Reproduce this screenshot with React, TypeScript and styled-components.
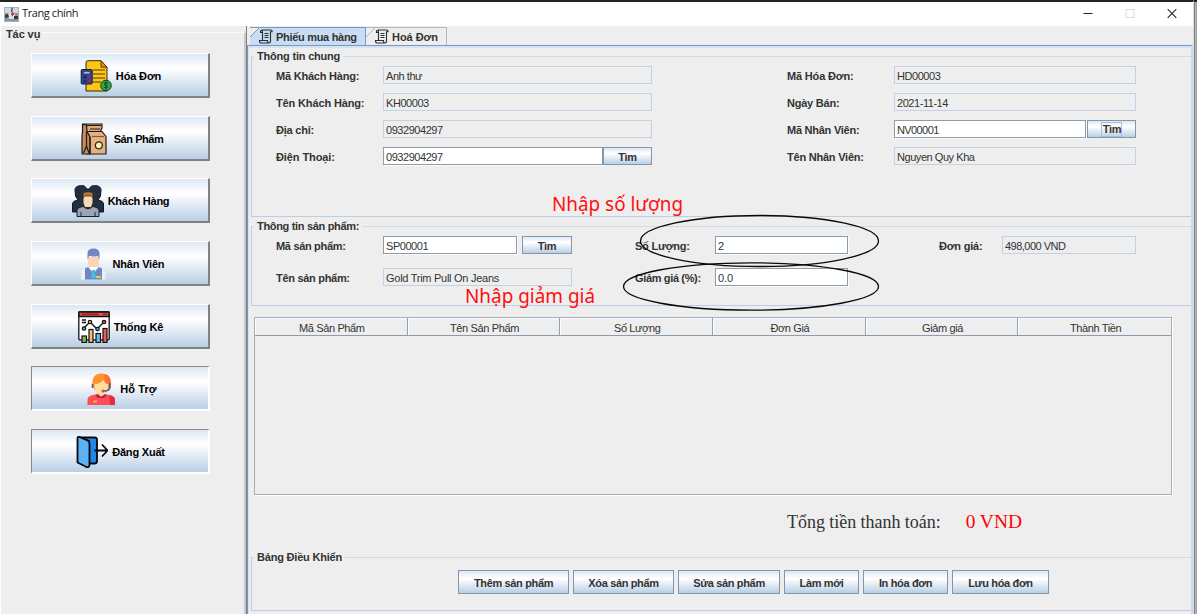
import React from "react";
import styled, { createGlobalStyle, css } from "styled-components";

const GlobalStyle = createGlobalStyle`
  * { box-sizing: border-box; }
  body { margin: 0; background: #eeeeee; }
`;

const Window = styled.div`
  position: relative;
  width: 1197px;
  height: 614px;
  overflow: hidden;
  display: flex;
  background: #eeeeee;
  color: #333333;
  font: 11px/14px "Liberation Sans", Arial, sans-serif;
`;

const Frame = styled.div`
  flex: 1;
  min-width: 0;
  display: flex;
  flex-direction: column;
  border-top: 2px solid #232323;
`;

const Edge = styled.div`
  width: 4px;
  border-top: 2px solid #232323;
  border-left: 1px solid #dcdcdc;
  background: linear-gradient(90deg, #808080 0 1px, #b4b4b4 1px 2px, #a2a2a2 2px);
`;

const TitleBar = styled.header`
  height: 24px;
  flex: none;
  display: flex;
  align-items: center;
  gap: 3px;
  padding: 0 16px 0 4px;
  background: #ffffff;
  color: #1a1a1a;
`;

const WindowTitle = styled.span`
  flex: 1;
  padding-bottom: 2px;
  font: 11px/14px "Open Sans", sans-serif;
  letter-spacing: -0.4px;
`;

const WindowControls = styled.div`
  display: flex;
  align-items: center;
  gap: 32px;
`;

const Body = styled.div`
  flex: 1;
  display: flex;
  min-height: 0;
`;

const Sidebar = styled.aside`
  width: 247px;
  flex: none;
  display: flex;
  border-left: 1px solid #ffffff;
  border-right: 1px solid #808080;
  padding-top: 6px;
`;

const TaskPanel = styled.section`
  flex: 1;
  border-top: 1px solid #fafafa;
  border-right: 2px solid #c9c9c9;
`;

const TaskLegend = styled.h2`
  margin: -6px 0 0 3px;
  width: fit-content;
  padding: 0 2px;
  background: #eeeeee;
  font-size: 11px;
  line-height: 14px;
  letter-spacing: -0.1px;
`;

const TaskList = styled.nav`
  display: flex;
  flex-direction: column;
  gap: 17.7px;
  padding: 12px 0 0 30px;
`;

const metal = css`
  background: linear-gradient(180deg, #dde8f3 0%, #ffffff 34%, #f8fafd 42%, #b8cfe5 100%);
`;

const TaskButton = styled.button<{ $sunken?: boolean; $spacing: number }>`
  width: 179px;
  height: 45px;
  padding: 2px 0 0 1px;
  display: flex;
  align-items: center;
  justify-content: center;
  gap: 4px;
  ${metal}
  border-style: solid;
  border-color: ${(p) => (p.$sunken ? "#8a8a8a #ffffff #ffffff #8a8a8a" : "#ffffff #828282 #828282 #ffffff")};
  border-width: 1px 2px 2px 1px;
  color: #000000;
  font: bold 11px/14px "Liberation Sans", Arial, sans-serif;
  letter-spacing: ${(p) => p.$spacing}px;
`;

const Main = styled.main`
  flex: 1;
  min-width: 0;
  display: flex;
  flex-direction: column;
`;

const TabStrip = styled.div`
  display: flex;
  height: 19px;
  padding: 1px 0 0 3px;
  flex: none;
`;

const Tab = styled.button<{ $active?: boolean; $width: number; $spacing: number }>`
  width: ${(p) => p.$width}px;
  height: 18px;
  display: flex;
  align-items: center;
  gap: 3px;
  padding: 0 0 0 9px;
  border: 1px solid ${(p) => (p.$active ? "#7a96c8" : "#b0b8c4")};
  border-bottom: 0;
  border-left-width: 0;
  background: ${(p) =>
    p.$active
      ? "linear-gradient(135deg, #eeeeee 6px, #7a96c8 6px 7px, #c8ddf2 7px)"
      : "linear-gradient(135deg, #eeeeee 6px, #a0b4d4 6px 7px, #eeeeee 7px)"};
  color: #333333;
  font: bold 11px/14px "Liberation Sans", Arial, sans-serif;
  letter-spacing: ${(p) => p.$spacing}px;
  white-space: nowrap;
`;

const TabPage = styled.div`
  flex: 1;
  display: flex;
  flex-direction: column;
  border: 1px solid #7a96c8;
  border-right: 2px solid #c8ddf2;
  border-bottom: 0;
  box-shadow: inset 1px 2px 0 #d6e4f2;
  padding: 10px 0 0 3px;
`;

const Group = styled.section<{ $height: number; $gap: number }>`
  flex: none;
  height: ${(p) => p.$height}px;
  margin-bottom: ${(p) => p.$gap}px;
  border: 1px solid #b8cfe5;
  border-top-color: #cddceb;
  border-right-width: 0;
`;

const Legend = styled.h3<{ $spacing?: number }>`
  width: fit-content;
  margin: -8px 0 1px 2px;
  padding: 0 3px;
  background: #eeeeee;
  font-size: 11px;
  line-height: 14px;
  letter-spacing: ${(p) => p.$spacing ?? -0.2}px;
`;

const InfoGrid = styled.div`
  display: grid;
  grid-template-columns: 107px 404px 107px 242px;
  grid-auto-rows: 18px;
  row-gap: 9px;
  padding: 2px 0 0 24px;
`;

const ProductGrid = styled.div`
  display: grid;
  grid-template-columns: 107px 252px 80px 224px 63px 134px;
  grid-auto-rows: 18px;
  row-gap: 14px;
  padding: 2px 0 0 24px;
`;

const Label = styled.label<{ $spacing?: number }>`
  font-weight: bold;
  line-height: 20px;
  white-space: nowrap;
  letter-spacing: ${(p) => p.$spacing ?? -0.22}px;
`;

const FieldRow = styled.div<{ $gap?: number }>`
  display: flex;
  gap: ${(p) => p.$gap ?? 0}px;
`;

const Field = styled.div<{ $width: number; $editable?: boolean; $spacing?: number }>`
  width: ${(p) => p.$width}px;
  height: 18px;
  padding-left: 2px;
  border: 1px solid ${(p) => (p.$editable ? "#8b9cae" : "#bfd2e6")};
  background: ${(p) => (p.$editable ? "#ffffff" : "#eeeeee")};
  box-shadow: ${(p) => (p.$editable ? "1px 1px 0 #fbfbfb" : "none")};
  line-height: 18px;
  letter-spacing: ${(p) => p.$spacing ?? -0.45}px;
  white-space: nowrap;
`;

const Button = styled.button<{ $width: number; $height?: number; $spacing?: number }>`
  width: ${(p) => p.$width}px;
  height: ${(p) => p.$height ?? 18}px;
  padding: 1px 0 0;
  border: 1px solid #8496aa;
  ${metal}
  color: #333333;
  font: bold 11px/14px "Liberation Sans", Arial, sans-serif;
  letter-spacing: ${(p) => p.$spacing ?? -0.35}px;
`;

const FocusText = styled.span`
  display: inline-block;
  padding: 0 0 0 1px;
  border: 1px solid #a8bfd9;
  line-height: 13px;
`;

const Table = styled.div`
  width: 918px;
  height: 178px;
  margin-left: 3px;
  flex: none;
  border: 1px solid #a4afba;
  box-shadow: 1px 1px 0 #ffffff;
`;

const TableHead = styled.div`
  display: grid;
  grid-template-columns: repeat(6, 1fr);
`;

const HeadCell = styled.div`
  height: 18px;
  padding-left: 2px;
  border-right: 1px solid #93a2b1;
  border-bottom: 1px solid #8b9cae;
  box-shadow: inset 1px 1px 0 #ffffff;
  text-align: center;
  line-height: 20px;
  letter-spacing: -0.37px;
  &:last-child { border-right: 0; }
`;

const TotalRow = styled.div`
  display: flex;
  align-items: baseline;
  gap: 25px;
  height: 62px;
  padding: 16px 0 0 536px;
  font: 18px/22px "Liberation Serif", "Times New Roman", serif;
  letter-spacing: -0.04px;
  white-space: nowrap;
`;

const TotalValue = styled.span`
  color: #ff0000;
  font-size: 19.5px;
`;

const Actions = styled.div`
  display: flex;
  gap: 4px;
  padding: 5px 0 0 206px;
`;

const Annotations = styled.svg`
  position: absolute;
  left: 440px;
  top: 185px;
  pointer-events: none;
`;

const JavaIcon = () => (
  <svg width="15" height="15" viewBox="0 0 15 15">
    <rect x=".5" y=".5" width="14" height="14" fill="#cfd8e0" stroke="#a7b4c0" />
    <path d="M1 6h13v8H1z" fill="#8496a8" />
    <path d="M7.500 1c2 1-1 2 .5 4" fill="none" stroke="#555" strokeWidth="1.500" />
    <path d="M4 7c2-2 5-2 7 0l-1 5H5z" fill="#dfe3e7" />
    <path d="M8 4.500l2.500 2-2 3-1.500-2z" fill="#c8372f" />
    <path d="M1 8l3-1 1 3-4 1zM10 9h4v3h-4z" fill="#30363e" />
  </svg>
);

const SheetIcon = () => (
  <svg width="14" height="15" viewBox="0 0 14 15" fill="none" stroke="#2c2c2c" strokeWidth="1.1">
    <path d="M3.500 11V3C3.500 1.500 2 1.200 1.500 2v1.500h2M2.500 1H11.500c1.500 0 1.800.700 1.500 1.800H11.500V12c0 1.300-.700 2-1.700 2H2C.900 14 .500 12.800.500 11.500H8.500c0 1.500.500 2.500 1.300 2.500" />
    <path d="M5.500 4.500h4M5.500 6.500h4M5.500 8.500h4" />
  </svg>
);

const InvoiceIcon = () => (
  <svg width="32" height="32" viewBox="0 0 32 32">
    <path d="M8 .700h13l6 6.500V31H6V3q0-2.300 2-2.300z" fill="#ffc414" stroke="#33280c" />
    <path d="M21 .700V7.200h6z" fill="#f28a1c" stroke="#33280c" strokeWidth=".8" />
    <path d="M13 10h12M13 14h12M13 18h12M13 22h8" stroke="#4c3a0a" />
    <rect x="1.200" y="9.500" width="11" height="14.500" rx="1" fill="#32458f" stroke="#141c46" />
    <path d="M3.500 11.500h6.500v2.500H3.500z" fill="#a9b4da" stroke="#141c46" strokeWidth=".5" />
    <path d="M3.500 17h3M5 15.500v3M3.500 21h3" stroke="#10173d" />
    <path d="M8 17h2.500M8 21h2.500" stroke="#b82133" strokeWidth="1.800" />
    <circle cx="26" cy="25.500" r="5.300" fill="#35a650" stroke="#143d20" />
    <path d="M28 23.200c-2-1.300-4-.500-3.700.900.400 1.500 3.500.900 3.500 2.500 0 1.300-2.300 1.700-4 .400M26 21.500v8" fill="none" stroke="#123f1d" strokeWidth=".9" />
  </svg>
);

const BagIcon = () => (
  <svg width="32" height="32" viewBox="0 0 32 32" stroke="#1f1a16" strokeWidth="1.200">
    <path d="M5 1h19v4l-2 4H9z" fill="#dfaa7c" />
    <path d="M5 2.500h18M12 6h10" fill="none" />
    <path d="M9 8.500h15l4 5V31H9z" fill="#e5b17e" />
    <path d="M4.500 1.500v7L4 13v18h8V14L9 8.500 8.500 2z" fill="#c58d62" />
    <path d="M8.500 9v14M8.500 23L5.500 30M8.500 23l2.500 7M12 14v17" fill="none" />
    <path d="M14 13.500h12" stroke="#8a5836" fill="none" />
    <path d="M20 19c3-.500 4.500 1 4.300 3.500-.300 3-2.700 4-5 3-2.500-.900-3-5.500.700-6.500z" fill="#fff0b8" />
  </svg>
);

const PeopleIcon = () => (
  <svg width="32" height="32" viewBox="0 0 32 32">
    <path d="M3 5C3 2 6 .500 9 .800c3-.800 5 1 5.500 3.200h3C18 1.500 20 .300 23 .800c3-.500 6 1.200 6 4.200l-.500 6-2.500 4c3 .800 5.500 1.500 5.500 4v8H.500v-8c0-2.500 2.500-3.200 5.500-4l-2.500-4z" fill="#222f40" stroke="#101820" />
    <path d="M11.500 11h9v7l-1.500 4h-6l-1.500-4z" fill="#fbd9b0" />
    <path d="M11 13V9c0-3 10-3 10 0v4l-2-2h-6z" fill="#b0713f" stroke="#412816" strokeWidth=".7" />
    <path d="M5 31.500V26c0-3 3-4 7-4.500 1 3 7 3 8 0 4 .500 7 1.500 7 4.500v5.500z" fill="#9aa6b5" stroke="#1b222b" />
    <path d="M9 27v4M23 27v4" stroke="#1b222b" />
  </svg>
);

const StaffIcon = () => (
  <svg width="32" height="32" viewBox="0 0 32 32">
    <path d="M11 9h11v6c0 5-3 7-5.500 7S11 20 11 15z" fill="#ffd3b5" />
    <path d="M10.500 12V5c0-3 2-4.500 6-4.500 5 0 6.500 3 6 7V12L21 8c-3 .800-7 .500-9 0z" fill="#6f88c0" />
    <path d="M4 31.500v-6c0-4 3-5.500 7.500-6.500L16.500 24l5-5C26 20 28.500 21.500 28.500 25.500v6z" fill="#edf0f5" />
    <path d="M8 20.500l3-1.500 5.500 5.500L22 19l3 1.500V31.500H8z" fill="#6f88c0" />
    <path d="M12 19h9l-4.500 7z" fill="#ffffff" />
    <path d="M15 22h3v3l1 4-2.500 2L14 29l1-4z" fill="#45bfe8" />
    <path d="M19 28h5v2h-5z" fill="#e2c65c" />
  </svg>
);

const ChartIcon = () => (
  <svg width="32" height="32" viewBox="0 0 32 32" stroke="#111111" strokeWidth="1.300">
    <rect x=".800" y=".800" width="30.400" height="28" rx="1.200" fill="#ffffff" />
    <path d="M1 1h30v4.500H1z" fill="#e8524c" />
    <path d="M3.500 3.200h17M25 3.200h4" stroke="#8f2723" strokeWidth="1.500" />
    <path d="M4 9h4M4 11.500h4" fill="none" />
    <path d="M6 17l6-6 7 7 7-7" fill="none" />
    <g strokeWidth="1.200">
      <rect x="4" y="25" width="4.500" height="6.500" fill="#7fb65b" />
      <rect x="11" y="18.500" width="4" height="13" fill="#f0c166" />
      <rect x="18" y="22.500" width="4.500" height="9" fill="#62bdea" />
      <rect x="25" y="17.500" width="4" height="14" fill="#ef5951" />
      <circle cx="6" cy="17.500" r="1.700" fill="#7fb65b" />
      <circle cx="12" cy="11" r="1.700" fill="#f0c166" />
      <circle cx="19.500" cy="18" r="1.700" fill="#62bdea" />
      <circle cx="26" cy="11" r="1.700" fill="#ef5951" />
    </g>
  </svg>
);

const SupportIcon = () => (
  <svg width="32" height="32" viewBox="0 0 32 32">
    <path d="M9 14C7 6 10 .500 17 .500S27.500 6 26 14l-3 4H11z" fill="#ff9233" />
    <path d="M20 1c7 1 8 7 6 13l-3 3z" fill="#ff7034" />
    <path d="M10.500 11c5 0 7-2 9-4 1 3 3 4 4.500 4v4c0 4-3 6-4 6v3h-6v-3c-2-1-3.500-3-3.500-6z" fill="#ffdc9f" />
    <path d="M3.500 32v-5c0-4 4-5 9-5.500l4.500 2 5-2c5 .500 9 2 9 5.500v5z" fill="#ff4f55" />
    <path d="M25 22c4 1 6 2 6 5v5h-5z" fill="#e32c46" />
    <path d="M11 22l3-1 3 3 4-3 2 1-3 3h-6z" fill="#b72352" />
    <path d="M8.500 11v4M26 10v4c0 3-2 4-6 4" fill="none" stroke="#53616f" strokeWidth="1.600" />
    <circle cx="19" cy="18" r="1.500" fill="#d5485d" />
    <path d="M9 27.500h4v2H9z" fill="#ffae51" />
  </svg>
);

const ExitIcon = () => (
  <svg width="32" height="32" viewBox="0 0 32 32" stroke="#080808" strokeWidth="1.800" strokeLinejoin="round">
    <path d="M2.500 1.500h16c1.500 0 2.500.800 2.500 2V25c0 1.500-1 2.500-2.500 2.500H13V5z" fill="#2088e8" />
    <path d="M1.500 2v24.500l8.500 4.300c2 .800 3.500 0 3.500-2V8c0-2-.500-3-2-3.600L3.500 1C2.200.700 1.500 1 1.500 2z" fill="#5cb0f5" />
    <path d="M18.500 14.500h13M26 8.500l5.500 6-5.500 6" fill="none" />
  </svg>
);

const tasks = [
  { label: "Hóa Đơn", Icon: InvoiceIcon, spacing: -0.15 },
  { label: "Sản Phẩm", Icon: BagIcon, spacing: -0.45 },
  { label: "Khách Hàng", Icon: PeopleIcon, spacing: -0.25 },
  { label: "Nhân Viên", Icon: StaffIcon, spacing: -0.2 },
  { label: "Thống Kê", Icon: ChartIcon, spacing: -0.15 },
  { label: "Hỗ Trợ", Icon: SupportIcon, sunken: true, spacing: 0.1 },
  { label: "Đăng Xuất", Icon: ExitIcon, sunken: true, spacing: -0.2 },
];

const columns = ["Mã Sản Phẩm", "Tên Sản Phẩm", "Số Lượng", "Đơn Giá", "Giảm giá", "Thành Tiền"];

const actions = [
  { label: "Thêm sản phẩm", width: 111 },
  { label: "Xóa sản phẩm", width: 101 },
  { label: "Sửa sản phẩm", width: 102 },
  { label: "Làm mới", width: 75 },
  { label: "In hóa đơn", width: 85 },
  { label: "Lưu hóa đơn", width: 97 },
];

export default function App() {
  return (
    <>
      <GlobalStyle />
      <Window>
        <Frame>
          <TitleBar>
            <JavaIcon />
            <WindowTitle>Trang chính</WindowTitle>
            <WindowControls>
              <svg width="10" height="10" viewBox="0 0 10 10"><path d="M.5 4.500h9" stroke="#222" /></svg>
              <svg width="10" height="10" viewBox="0 0 10 10"><rect x="1" y=".5" width="8" height="8" fill="none" stroke="#dcdcdc" /></svg>
              <svg width="10" height="10" viewBox="0 0 10 10"><path d="M.7.2l8.600 8.600M9.300.2L.7 8.800" stroke="#222" strokeWidth="1.100" /></svg>
            </WindowControls>
          </TitleBar>
          <Body>
            <Sidebar>
              <TaskPanel>
                <TaskLegend>Tác vụ</TaskLegend>
                <TaskList>
                  {tasks.map(({ label, Icon, sunken, spacing }) => (
                    <TaskButton key={label} $sunken={sunken} $spacing={spacing}>
                      <Icon />
                      {label}
                    </TaskButton>
                  ))}
                </TaskList>
              </TaskPanel>
            </Sidebar>
            <Main>
              <TabStrip>
                <Tab $active $width={116} $spacing={-0.3}><SheetIcon />Phiếu mua hàng</Tab>
                <Tab $width={81} $spacing={-0.05}><SheetIcon />Hoá Đơn</Tab>
              </TabStrip>
              <TabPage>
                <Group $height={161} $gap={9}>
                  <Legend>Thông tin chung</Legend>
                  <InfoGrid>
                    <Label>Mã Khách Hàng:</Label>
                    <Field $width={269}>Anh thư</Field>
                    <Label $spacing={-0.17}>Mã Hóa Đơn:</Label>
                    <Field $width={242}>HD00003</Field>
                    <Label $spacing={-0.14}>Tên Khách Hàng:</Label>
                    <Field $width={269}>KH00003</Field>
                    <Label>Ngày Bán:</Label>
                    <Field $width={242}>2021-11-14</Field>
                    <Label>Địa chỉ:</Label>
                    <Field $width={269}>0932904297</Field>
                    <Label $spacing={-0.25}>Mã Nhân Viên:</Label>
                    <FieldRow $gap={1}>
                      <Field $width={192} $editable $spacing={-0.6}>NV00001</Field>
                      <Button $width={49}><FocusText>Tìm</FocusText></Button>
                    </FieldRow>
                    <Label $spacing={-0.1}>Điện Thoại:</Label>
                    <FieldRow>
                      <Field $width={220} $editable>0932904297</Field>
                      <Button $width={49}>Tìm</Button>
                    </FieldRow>
                    <Label>Tên Nhân Viên:</Label>
                    <Field $width={242}>Nguyen Quy Kha</Field>
                  </InfoGrid>
                </Group>
                <Group $height={80} $gap={11}>
                  <Legend $spacing={-0.32}>Thông tin sản phẩm:</Legend>
                  <ProductGrid>
                    <Label $spacing={-0.32}>Mã sản phẩm:</Label>
                    <FieldRow $gap={5}>
                      <Field $width={134} $editable>SP00001</Field>
                      <Button $width={50}>Tìm</Button>
                    </FieldRow>
                    <Label>Số Lượng:</Label>
                    <Field $width={133} $editable>2</Field>
                    <Label>Đơn giá:</Label>
                    <Field $width={134} $spacing={-0.52}>498,000 VND</Field>
                    <Label $spacing={-0.3}>Tên sản phẩm:</Label>
                    <Field $width={189} $spacing={-0.27}>Gold Trim Pull On Jeans</Field>
                    <Label $spacing={-0.35}>Giảm giá (%):</Label>
                    <Field $width={133} $editable $spacing={-0.1}>0.0</Field>
                  </ProductGrid>
                </Group>
                <Table>
                  <TableHead>
                    {columns.map((name) => <HeadCell key={name}>{name}</HeadCell>)}
                  </TableHead>
                </Table>
                <TotalRow>
                  <span>Tổng tiền thanh toán:</span>
                  <TotalValue>0 VND</TotalValue>
                </TotalRow>
                <Group $height={54} $gap={0}>
                  <Legend>Bảng Điều Khiển</Legend>
                  <Actions>
                    {actions.map(({ label, width }) => (
                      <Button key={label} $width={width} $height={24}>{label}</Button>
                    ))}
                  </Actions>
                </Group>
              </TabPage>
            </Main>
          </Body>
        </Frame>
        <Edge />
        <Annotations width="450" height="135" viewBox="440 185 450 135">
          <g fill="none" stroke="#0a0a0a" strokeWidth="1.300">
            <ellipse cx="759.500" cy="241" rx="119" ry="25.500" />
            <ellipse cx="751" cy="286.500" rx="127.500" ry="23.700" />
          </g>
          <g fill="#ff0f0f" fontFamily="'Noto Sans', sans-serif" fontSize="20">
            <text x="552" y="211" textLength="131" lengthAdjust="spacingAndGlyphs">Nhập số lượng</text>
            <text x="465" y="303" textLength="130" lengthAdjust="spacingAndGlyphs">Nhập giảm giá</text>
          </g>
        </Annotations>
      </Window>
    </>
  );
}
